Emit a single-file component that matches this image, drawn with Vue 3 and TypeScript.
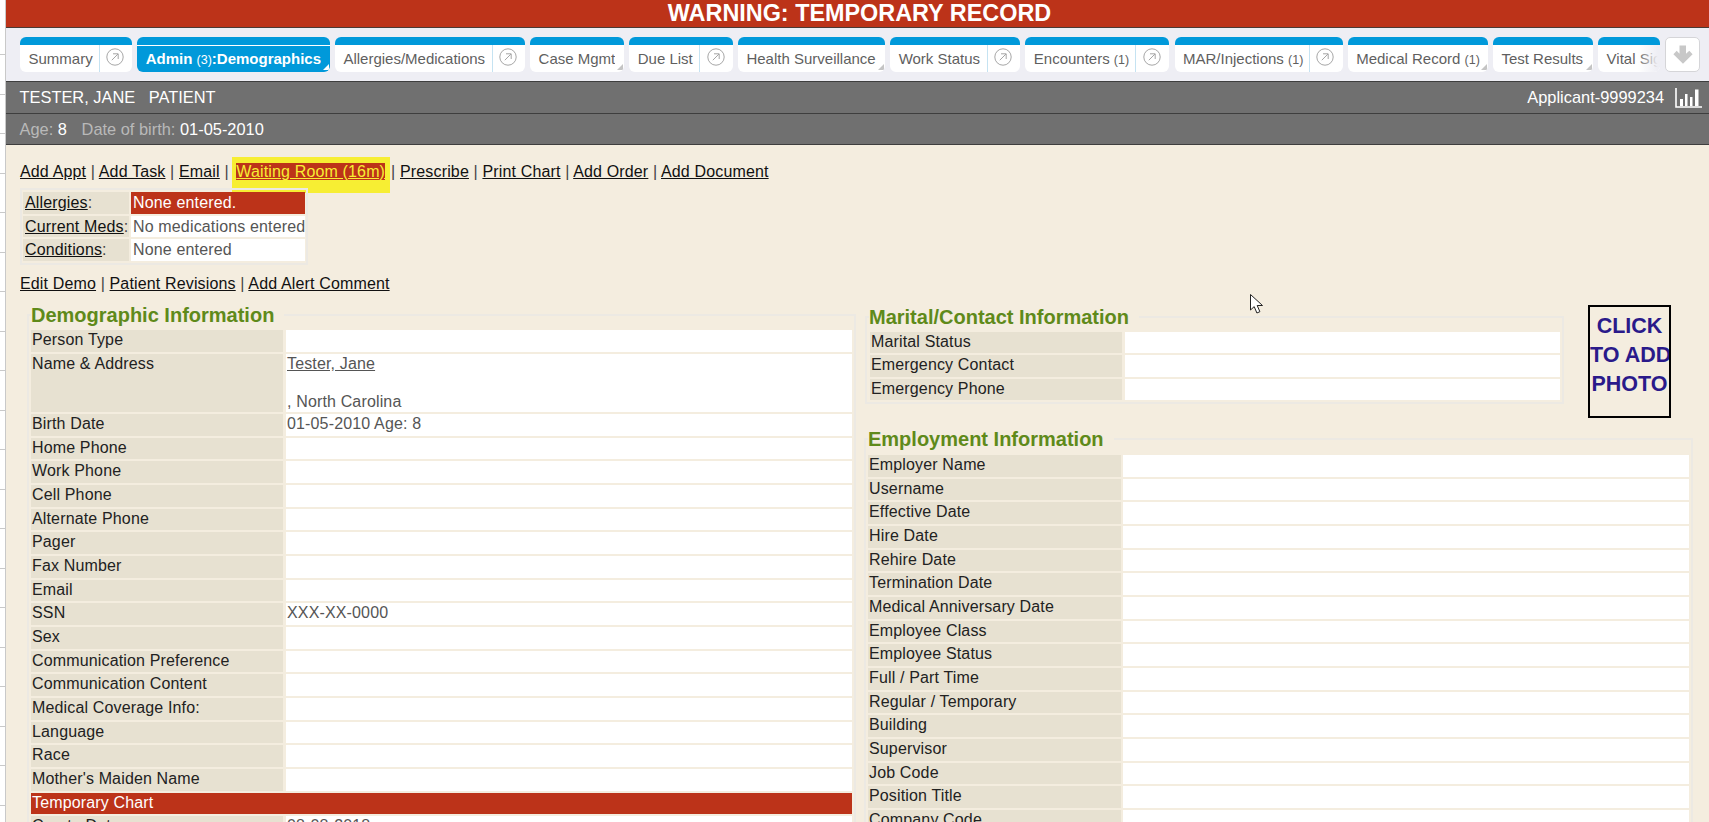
<script setup lang="ts">
interface Tab { label: string; count?: string; suffix?: string; w: number; arrow?: boolean; corner?: boolean; active?: boolean; fade?: boolean; split?: number }
const tabs: Tab[] = [
  { label: 'Summary', w: 112, arrow: true, split: 79 },
  { label: 'Admin ', count: '(3)', suffix: ':Demographics', w: 192.5, corner: true, active: true },
  { label: 'Allergies/Medications', w: 190, arrow: true, split: 157 },
  { label: 'Case Mgmt', w: 94, corner: true },
  { label: 'Due List', w: 103.5, arrow: true, split: 70 },
  { label: 'Health Surveillance', w: 147, corner: true },
  { label: 'Work Status', w: 130, arrow: true, split: 96.5 },
  { label: 'Encounters ', count: '(1)', w: 144, arrow: true, split: 110 },
  { label: 'MAR/Injections ', count: '(1)', w: 168, arrow: true, split: 134.5 },
  { label: 'Medical Record ', count: '(1)', w: 140, corner: true },
  { label: 'Test Results', w: 100, corner: true },
  { label: 'Vital Signs', w: 62, fade: true },
]
const actions1 = ['Add Appt', 'Add Task', 'Email']
const actions2 = ['Prescribe', 'Print Chart', 'Add Order', 'Add Document']
const alerts = [
  { k: 'Allergies', v: 'None entered.', bad: true },
  { k: 'Current Meds', v: 'No medications entered', bad: false },
  { k: 'Conditions', v: 'None entered', bad: false },
]
const demoBefore = ['Person Type']
const demoAfter: [string, string][] = [
  ['Birth Date', '01-05-2010 Age: 8'], ['Home Phone', ''], ['Work Phone', ''], ['Cell Phone', ''],
  ['Alternate Phone', ''], ['Pager', ''], ['Fax Number', ''], ['Email', ''], ['SSN', 'XXX-XX-0000'],
  ['Sex', ''], ['Communication Preference', ''], ['Communication Content', ''],
  ['Medical Coverage Info:', ''], ['Language', ''], ['Race', ''], ["Mother's Maiden Name", ''],
]
const marital = ['Marital Status', 'Emergency Contact', 'Emergency Phone']
const employment = ['Employer Name', 'Username', 'Effective Date', 'Hire Date', 'Rehire Date', 'Termination Date',
  'Medical Anniversary Date', 'Employee Class', 'Employee Status', 'Full / Part Time', 'Regular / Temporary',
  'Building', 'Supervisor', 'Job Code', 'Position Title', 'Company Code']
</script>

<template>
  <div class="screen">
    <div class="strip"></div>
    <div class="main">
      <div class="warning">WARNING: TEMPORARY RECORD</div>

      <nav class="tabbar">
        <div class="tabs">
          <div v-for="t in tabs" :key="t.label" class="tab" :class="{ active: t.active, fade: t.fade }" :style="{ width: t.w + 'px' }">
            <div class="tab-body">
              <span class="tab-label" :style="t.split ? { width: t.split + 'px' } : undefined">{{ t.label }}<small v-if="t.count">{{ t.count }}</small>{{ t.suffix }}</span>
              <span v-if="t.arrow" class="tab-arrow">
                <svg width="18" height="18" viewBox="0 0 18 18"><circle cx="9" cy="9" r="8.2" fill="none" stroke="#a6a6a6" stroke-width="1"/><path d="M5.800 12.200 12 6M7 5.800h5.200V11" fill="none" stroke="#a6a6a6" stroke-width="1"/></svg>
              </span>
              <i v-if="t.corner" class="corner"></i>
            </div>
          </div>
        </div>
        <button class="down" type="button" aria-label="More tabs">
          <svg width="22" height="22" viewBox="0 0 22 22"><path d="M7.500 1.500h6.500v8.300l3.300-3.100 3.300 3.500L11 19.700 1.400 10.200l3.300-3.500 2.800 3.100z" fill="#c8c8c8"/></svg>
        </button>
      </nav>

      <header class="patient">
        <div class="pt-row first">
          <span>TESTER, JANE &nbsp; PATIENT</span>
          <span class="pt-right">Applicant-9999234
            <svg width="27" height="20" viewBox="0 0 27 20"><path d="M1 0v19h26" fill="none" stroke="#fff" stroke-width="1.600"/><path d="M5 11h3v7H5zM10 6h2.500v12H10zM15 9h2.500v9H15zM20 1.500h3.500V18H20z" fill="#fff"/></svg>
          </span>
        </div>
        <div class="pt-row second"><span><em>Age:</em> 8 &nbsp;&nbsp;<em class="dob">Date of birth:</em> 01-05-2010</span></div>
      </header>

      <section class="content">
        <div class="links">
          <template v-for="a in actions1" :key="a"><a>{{ a }}</a> | </template>
          <span class="wait"><a>Waiting Room (16m)</a></span>|
          <template v-for="(a, i) in actions2" :key="a"><a>{{ a }}</a><template v-if="i < actions2.length - 1"> | </template></template>
        </div>

        <div class="alerts">
          <div v-for="r in alerts" :key="r.k" class="alert-row">
            <div class="alert-key"><a>{{ r.k }}</a><span>:</span></div>
            <div class="alert-val" :class="{ bad: r.bad }">{{ r.v }}</div>
          </div>
        </div>

        <div class="links second-links"><a>Edit Demo</a> | <a>Patient Revisions</a> | <a>Add Alert Comment</a></div>

        <div class="columns">
          <fieldset class="box demo">
            <legend>Demographic Information</legend>
            <div class="rows">
              <div v-for="l in demoBefore" :key="l" class="row"><div class="lab">{{ l }}</div><div class="val"></div></div>
              <div class="row tall">
                <div class="lab">Name &amp; Address</div>
                <div class="val"><a class="plain">Tester, Jane</a><br><br>, North Carolina</div>
              </div>
              <div v-for="r in demoAfter" :key="r[0]" class="row"><div class="lab">{{ r[0] }}</div><div class="val">{{ r[1] }}</div></div>
              <div class="row-full">Temporary Chart</div>
              <div class="row"><div class="lab">Create Date</div><div class="val">08-08-2018</div></div>
            </div>
          </fieldset>

          <div class="right">
            <div class="right-top">
              <fieldset class="box marital">
                <legend>Marital/Contact Information</legend>
                <div class="rows">
                  <div v-for="l in marital" :key="l" class="row"><div class="lab">{{ l }}</div><div class="val"></div></div>
                </div>
              </fieldset>
              <div class="photo">CLICK<br>TO ADD<br>PHOTO</div>
            </div>
            <fieldset class="box employ">
              <legend>Employment Information</legend>
              <div class="rows">
                <div v-for="l in employment" :key="l" class="row"><div class="lab">{{ l }}</div><div class="val"></div></div>
              </div>
            </fieldset>
          </div>
        </div>
      </section>
    </div>
    <svg class="cursor" width="14" height="21" viewBox="0 0 14 21"><path d="M.5.5v15.500l3.700-3.400 2.700 6.400 3-1.300-2.700-6.200h5.300z" fill="#fff" stroke="#222" stroke-width="1"/></svg>
  </div>
</template>

<style>
html, body { margin: 0; background: #f4eddf; overflow: hidden; }
</style>

<style scoped>
.screen {
  position: relative;
  display: flex;
  width: 1709px;
  height: 822px;
  overflow: hidden;
  font-family: "Liberation Sans", Arial, sans-serif;
  font-size: 16px;
  color: #222;
}
.strip {
  flex: 0 0 5px;
  border-right: 1px solid #c9c9c9;
  background: repeating-linear-gradient(to bottom, #fff 0, #fff 38.500px, #c9c9c9 38.500px, #c9c9c9 39.500px) 0 16px;
}
.main { flex: 1; min-width: 0; background: #f4eddf; }

.warning {
  height: 27px;
  padding-left: 4px;
  background: #bc3319;
  border-bottom: 1px solid #4a3a35;
  color: #fff;
  font-weight: 700;
  font-size: 23.400px;
  line-height: 27px;
  text-align: center;
}

.tabbar {
  display: flex;
  height: 53px;
  box-sizing: border-box;
  padding: 9px 8px 0 14px;
  background: #eeeef4;
}
.tabs { display: flex; gap: 5.200px; flex: 0 0 1640px; overflow: hidden; height: 35px; align-items: flex-start; }
.tab {
  flex: none;
  height: 35px;
  box-sizing: border-box;
  border-top: 8px solid #0099da;
  border-radius: 6px;
  background: #fff;
  overflow: hidden;
  color: #5f5f5f;
  font-size: 15px;
}
.tab-body { position: relative; display: flex; height: 27px; align-items: center; }
.tab-label { box-sizing: border-box; padding-left: 8.500px; white-space: nowrap; height: 27px; line-height: 27px; overflow: hidden; flex: none; }
.tab-label small { font-size: 12.500px; }
.tab-arrow {
  flex: 1;
  height: 27px;
  display: flex;
  align-items: center;
  justify-content: center;
  padding-bottom: 3px;
  padding-right: 2px;
  box-sizing: border-box;
  border-left: 1px solid #c5e3f2;
}
.corner {
  position: absolute;
  right: 1px;
  bottom: 2px;
  width: 0;
  height: 0;
  border-style: solid;
  border-width: 0 0 6px 6px;
  border-color: transparent transparent #c4c4c4 transparent;
}
.tab.active { color: #fff; background: #0099da; font-weight: 700; }
.tab.active .tab-body { border-top: 1px solid #fff; height: 26px; }
.tab.active .tab-label { line-height: 25px; height: 26px; }
.tab.active .corner { border-bottom-color: #fff; }
.tab.active small { font-weight: 400; }
.tab.fade { position: relative; }
.tab.fade::after {
  content: "";
  position: absolute;
  inset: -8px 0 0 auto;
  width: 22px;
  background: linear-gradient(to right, rgba(238, 238, 244, 0), #eeeef4 90%);
}
.down {
  flex: none;
  margin-left: 5px;
  width: 35px;
  height: 35px;
  padding: 0;
  display: flex;
  align-items: center;
  justify-content: center;
  background: #fff;
  border: 1px solid #d5d5d8;
  border-radius: 5px;
}

.patient { background: #707070; color: #fff; font-size: 16.400px; }
.pt-row {
  display: flex;
  justify-content: space-between;
  align-items: center;
  box-sizing: border-box;
  height: 32px;
  padding: 0 7px 0 13.500px;
  border-top: 1px solid #3e3e3e;
}
.pt-row.second { height: 32px; border-bottom: 1px solid #3e3e3e; }
.pt-row em { font-style: normal; color: #b9b9b9; }
.pt-row em.dob { margin-left: 1px; }
.pt-right { display: flex; align-items: center; gap: 11px; }

.content { padding: 17px 0 0 14px; letter-spacing: 0.150px; }
.links { height: 20px; line-height: 20px; color: #444; white-space: nowrap; }
.links a { color: #111; text-decoration: underline; }
.wait { background: #f7ee33; padding: 6px 5px 13px 4px; margin: 0 1px 0 -1px; }
.wait a { background: #bc3319; color: #f7ee33; }

.alerts {
  display: inline-flex;
  flex-direction: column;
  gap: 2px;
  margin-top: 6px;
  padding: 2px 1px;
  border: 2px solid #ece9e3;
  vertical-align: top;
  position: relative;
}
.alert-row { display: grid; grid-template-columns: 106px 174px; column-gap: 2px; height: 21.500px; line-height: 21px; }
.alert-key { background: #e7e1d1; padding-left: 2px; color: #444; }
.alert-key a { color: #111; text-decoration: underline; }
.alert-val { background: #fff; color: #555; padding-left: 2px; white-space: nowrap; }
.alert-val.bad { background: #bc3319; color: #fff; }
.second-links { margin-top: 9px; }

.columns { display: flex; align-items: flex-start; margin-top: 10px; margin-left: 7px; gap: 8px; }
.box { margin: 0; padding: 0 2px 2px; border: 2px solid #ece9e3; min-width: 0; box-sizing: border-box; }
.box legend {
  padding: 0 10px 0 0;
  margin: 0;
  color: #5f8a1a;
  font-weight: 700;
  font-size: 20px;
  letter-spacing: 0;
  line-height: 22px;
}
.rows { display: flex; flex-direction: column; gap: 2px; margin-top: 4.700px; }
.row { display: grid; grid-template-columns: 252px 1fr; column-gap: 3px; height: 21.670px; line-height: 20px; flex: none; }
.lab { background: #e7e1d1; padding-left: 1px; color: #222; white-space: nowrap; }
.val { background: #fff; color: #555; padding-left: 1px; }
.row.tall { height: 58.300px; line-height: 19px; }
.plain { text-decoration: underline; color: #555; }
.row-full { height: 21.670px; line-height: 20px; background: #bc3319; color: #fff; padding-left: 1px; flex: none; }

.demo { width: 829px; height: 545px; flex: none; }
.right { width: 829px; flex: none; }
.right-top { display: flex; align-items: flex-start; height: 124px; }
.marital { width: 699px; margin-left: 1px; margin-top: 2px; padding-bottom: 2px; flex: none; }
.marital .rows { margin-left: 1px; margin-top: 4px; }
.photo {
  box-sizing: border-box;
  width: 83px;
  height: 113px;
  margin-left: 24px;
  margin-top: 1px;
  padding-top: 5px;
  border: 2px solid #000;
  color: #2a1a8a;
  font-weight: 700;
  font-size: 21.500px;
  letter-spacing: 0;
  line-height: 29px;
  text-align: center;
  white-space: nowrap;
  overflow: hidden;
}
.employ { width: 829px; height: 403px; }
.employ .rows { margin-top: 5.500px; }
.employ .row { grid-template-columns: 253px 1fr; column-gap: 2px; }
.cursor { position: absolute; left: 1250px; top: 294px; }
</style>
